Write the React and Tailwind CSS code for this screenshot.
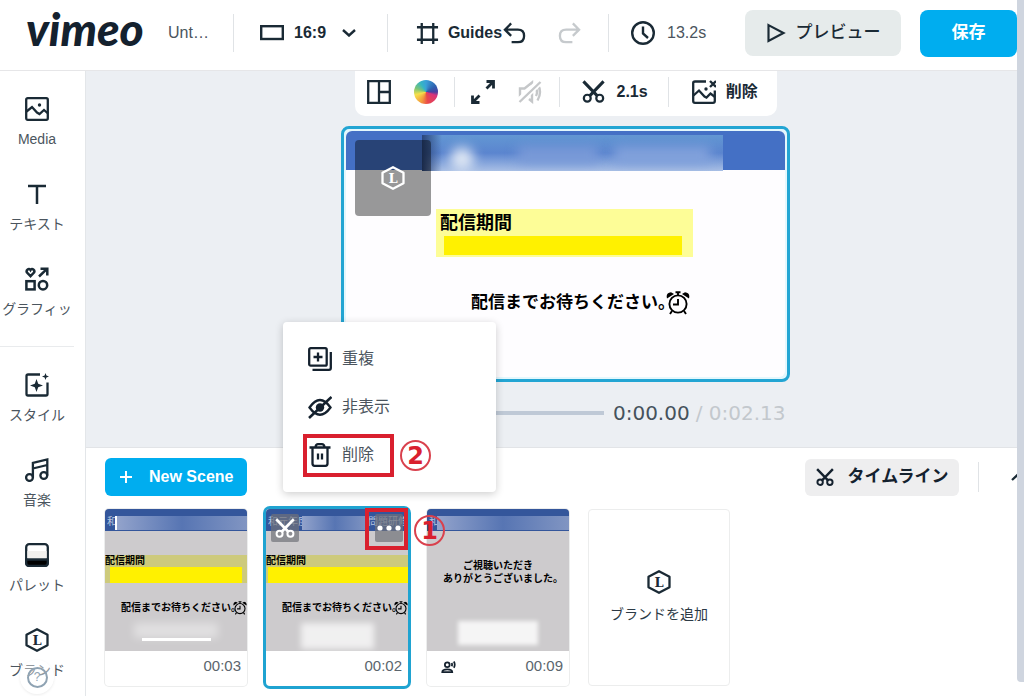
import { useState } from "react";
import clsx from "clsx";

/* icons, all drawn on a 24 x 24 grid */
const Icon = ({ children, className = "size-6", ...props }) => (
  <svg
    viewBox="0 0 24 24"
    fill="none"
    stroke="currentColor"
    strokeWidth="2.300"
    aria-hidden="true"
    className={clsx("shrink-0", className)}
    {...props}
  >
    {children}
  </svg>
);

const MediaIcon = () => (
  <Icon>
    <rect x="1.2" y="1.2" width="21.6" height="21.6" rx="1.5" />
    <path d="M1.500 14.500 7 10l5 5.500 2.500 1.500 4.500-4 4 3.500" />
    <circle cx="14.500" cy="8" r="1.700" fill="currentColor" stroke="none" />
  </Icon>
);

const TextIcon = () => (
  <Icon>
    <path d="M3 4h18M12 4v18" strokeWidth="2.500" />
  </Icon>
);

const GraphicsIcon = () => (
  <Icon strokeWidth="2.500">
    <path d="M5.500 9.200 2 5.600C.6 3.200 4 .4 5.500 3 7 .4 10.400 3.200 9 5.600Z" />
    <path d="M14 9.500 22 1.800M15.500 1.800H22.300V8.500" />
    <rect x="1.400" y="14.200" width="8.200" height="8.200" />
    <circle cx="18" cy="18.200" r="4.200" />
  </Icon>
);

const StyleIcon = () => (
  <Icon>
    <path d="M15 1.500H3Q1.500 1.500 1.500 3V21Q1.500 22.500 3 22.500H21Q22.500 22.500 22.500 21V9.500" />
    <path
      d="M11.500 6 13.200 10.800l4.800 1.700-4.800 1.700L11.500 19l-1.700-4.800L5 12.500l4.800-1.700ZM20.500 0l.9 2.600L24 3.500l-2.600.9-.9 2.600-.9-2.600L17 3.500l2.600-.9Z"
      fill="currentColor"
      stroke="none"
    />
  </Icon>
);

const MusicIcon = () => (
  <Icon>
    <circle cx="4.500" cy="19.500" r="3.400" />
    <circle cx="18.800" cy="17.500" r="3.400" />
    <path d="M7.900 19.500V5L22.300 1.500V17.500M7.900 10.500 22.300 7" />
  </Icon>
);

const PaletteIcon = () => (
  <Icon>
    <rect x="1.200" y="1.200" width="21.600" height="21.600" rx="3" fill="#fff" />
    <path d="M2.400 8h19.200v7H2.400z" fill="#f1f0ee" stroke="none" />
    <path d="M1.200 16.500h21.600V20q0 2.800-2.800 2.800H4q-2.800 0-2.800-2.800z" fill="#000" />
  </Icon>
);

const BrandIcon = (props) => (
  <Icon {...props}>
    <path d="M12 1.200 22.500 6.800V17.200L12 22.800 1.500 17.200V6.800Z" strokeLinejoin="round" />
    <text
      x="12"
      y="16.500"
      textAnchor="middle"
      fontSize="13"
      fontWeight="700"
      fill="currentColor"
      stroke="none"
      className="font-['DejaVu_Serif',serif]"
    >
      L
    </text>
  </Icon>
);

const ScissorsIcon = (props) => (
  <Icon {...props}>
    <circle cx="5.500" cy="19" r="3.600" />
    <circle cx="18.500" cy="19" r="3.600" />
    <path d="M1.500 1.500 16 16.500M22.500 1.500 8 16.500" strokeWidth="3.200" />
  </Icon>
);

const LayoutIcon = () => (
  <Icon>
    <path d="M1.200 1.200H22.800V22.800H1.200ZM12 1V23M12 12H23" />
  </Icon>
);

const ExpandIcon = () => (
  <Icon strokeWidth="2.800">
    <path d="M15.500 8.500 22 2M15.500 1.500h7V8.500M8.500 15.500 2 22M1.500 15.500v7H8.500" />
  </Icon>
);

const MuteIcon = () => (
  <Icon strokeWidth="2.400">
    <path d="M8 17H2V8.500H6.500L14 2.500V21.500L11 19" />
    <path d="M18 8.500q2 3.500 0 7.500M19.500 4q5 8 0 16.500" />
    <path d="M1 21.500 22 1.500" stroke="#fff" strokeWidth="7" />
    <path d="M1.500 22 22.500 2" />
  </Icon>
);

const ImageOffIcon = () => (
  <Icon>
    <path d="M14 1.500H3Q1.200 1.500 1.200 3V21Q1.200 22.800 3 22.800H21Q22.800 22.800 22.800 21V10.500" />
    <path d="M1.500 15.500 7 10.500l5.500 6 2 1 4-4 4.500 3.500M18 1l6 6M24 1 18 7" />
    <circle cx="14" cy="9" r="1.700" fill="currentColor" stroke="none" />
  </Icon>
);

const DuplicateIcon = () => (
  <Icon>
    <rect x="1.200" y="1.200" width="17.500" height="17.500" rx="1.500" />
    <path d="M5.500 10h9M10 5.500v9M22.800 5V21q0 1.800-1.800 1.800H4.500" />
  </Icon>
);

const HideIcon = () => (
  <Icon>
    <path d="M1.500 12.500Q12-2.500 22.500 12.500 12 27 1.500 12.500Z" />
    <circle cx="12" cy="12.500" r="4.200" fill="currentColor" stroke="none" />
    <path d="M1 23 23.500 2" strokeWidth="2.600" />
  </Icon>
);

const TrashIcon = () => (
  <Icon>
    <path d="M4.500 5V20.500Q4.500 22.800 6.500 22.800H17.500Q19.500 22.800 19.500 20.500V5M1.500 4.500H22.500M7.500 4Q8 1.200 10 1.200H14Q16 1.200 16.500 4" />
    <path d="M10 10.500v6M14 10.500v6" />
  </Icon>
);

const AlarmIcon = ({ className }) => (
  <Icon strokeWidth="1.900" className={className}>
    <circle cx="12" cy="13" r="8.600" />
    <path d="M12 8v5.500H7M12 4V1M9.500 1.200h5M6 20l-2 3M18 20l2 3" />
    <path
      d="M1 7.500Q-.5 2 5 1.200L8 3ZM23 7.500Q24.500 2 19 1.200L16 3Z"
      fill="currentColor"
      stroke="none"
    />
  </Icon>
);

const PresenterIcon = () => (
  <Icon className="size-[15px]" strokeWidth="2.800">
    <circle cx="10" cy="9" r="3.800" />
    <path d="M2 21q0-4.500 8-4.500t8 4.500z" />
    <path d="M17 6.500q1.500 2.500 0 5M20.500 4q3 5 0 10" />
  </Icon>
);

const mainTools = [
  { label: "Media", icon: MediaIcon },
  { label: "テキスト", icon: TextIcon },
  { label: "グラフィッ", icon: GraphicsIcon },
];

const styleTools = [
  { label: "スタイル", icon: StyleIcon },
  { label: "音楽", icon: MusicIcon },
  { label: "パレット", icon: PaletteIcon },
  { label: "ブランド", icon: BrandIcon },
];

const menuItems = [
  { label: "重複", icon: DuplicateIcon },
  { label: "非表示", icon: HideIcon },
  { label: "削除", icon: TrashIcon },
];

const App = () => {
  const [selected, setSelected] = useState(1);

  return (
    <div className="flex min-h-screen bg-white font-['Liberation_Sans','Noto_Sans_CJK_JP',sans-serif] text-[#1a2a35]">
      <div className="flex min-w-0 flex-1 flex-col overflow-hidden">
        <Header />
        <div className="flex flex-1">
          <Sidebar />
          <main className="flex min-w-0 flex-1 flex-col border-l border-[#e3e6e9]">
            <Stage />
            <Timeline selected={selected} setSelected={setSelected} />
          </main>
        </div>
      </div>
      {/* scroll bar */}
      <div className="w-[7px] shrink-0 pb-3.5">
        <div className="h-full rounded-bl bg-[#cfd5df]" />
      </div>
    </div>
  );
};

const Divider = ({ className }) => (
  <div className={clsx("w-px shrink-0 bg-[#e0e3e6]", className)} />
);

const Header = () => (
  <header className="flex h-[71px] items-center border-b border-[#e6e6e8] pb-1 pl-[26px]">
    <a
      href="#home"
      className="w-[118px] shrink-0 pb-2 font-['Lato',sans-serif] text-[46px] leading-none font-black text-[#14212e] italic"
    >
      vimeo
    </a>
    <span className="ml-6 w-[43px] shrink-0 text-base text-[#4b555e]">Unt…</span>
    <Divider className="ml-[22px] h-[38px]" />
    <button className="ml-[26px] flex shrink-0 items-center text-base font-bold">
      <Icon className="h-4 w-6" viewBox="0 0 24 16" strokeWidth="2.400">
        <rect x="1.200" y="1.200" width="21.600" height="12.800" />
      </Icon>
      <span className="ml-2.5 w-[48px] text-left">16:9</span>
      <Icon className="h-2 w-3.5" viewBox="0 0 14 8" strokeWidth="2.400">
        <path d="M1 1 7 6.500 13 1" />
      </Icon>
    </button>
    <Divider className="ml-[31px] h-[38px]" />
    <button className="ml-7 flex shrink-0 items-center gap-2 text-base font-bold">
      <Icon className="size-[23px]" strokeWidth="2.400">
        <path d="M1 5.500h22M1 18.500h22M6 1v22M18 1v22" />
      </Icon>
      <span className="w-14">Guides</span>
    </button>
    <button aria-label="Undo" className="shrink-0">
      <Icon className="size-[23px]" strokeWidth="2.400">
        <path d="M8.500 1.500 2 8l6.500 6.500M2 8h13.500q6.500 0 6.500 6.500T15.500 21H9" />
      </Icon>
    </button>
    <button aria-label="Redo" className="ml-8 shrink-0 text-[#c6cacd]">
      <Icon className="size-[23px]" strokeWidth="2.400">
        <path d="M15.500 1.500 22 8l-6.500 6.500M22 8H8.500Q2 8 2 14.500T8.500 21H15" />
      </Icon>
    </button>
    <Divider className="ml-[27px] h-[38px]" />
    <div className="ml-[22px] flex shrink-0 items-center gap-3 text-base text-[#4b555e]">
      <Icon className="size-6 text-[#1a2a35]" strokeWidth="2.400">
        <circle cx="12" cy="12" r="10.800" />
        <path d="M12 5.500V12.500L17 17" />
      </Icon>
      13.2s
    </div>
    <button className="ml-auto flex h-[46px] w-[156px] shrink-0 items-center justify-center gap-2.5 rounded-lg bg-[#e6ebeb] text-[17px] font-medium">
      <Icon className="size-5">
        <path d="M3 2.500 21 12 3 21.500Z" strokeWidth="2.600" />
      </Icon>
      プレビュー
    </button>
    <button className="ml-[19px] h-[47px] w-[97px] shrink-0 rounded-lg bg-[#00adef] text-[17px] font-bold text-white">
      保存
    </button>
  </header>
);

const SideTool = ({ label, icon: ToolIcon }) => (
  <button className="flex h-[85px] w-full flex-col items-center gap-1.5 pt-6">
    <ToolIcon />
    <span className="text-sm leading-6 whitespace-nowrap text-[#4b555e]">
      {label}
    </span>
  </button>
);

const Sidebar = () => (
  <nav className="relative w-[85px] shrink-0 pt-0.5 pr-[11px]">
    {mainTools.map((tool) => (
      <SideTool key={tool.label} {...tool} />
    ))}
    <div className="mt-[18px] h-px bg-[#e9ebed]" />
    <div className="pt-0.5">
      {styleTools.map((tool) => (
        <SideTool key={tool.label} {...tool} />
      ))}
    </div>
    {/* help bubble floats over the last tool */}
    <button
      aria-label="Help"
      className="absolute bottom-0.5 left-5 flex size-[34px] items-center justify-center rounded-full bg-white/40 shadow-[0_1px_3px_rgba(0,0,0,0.08)]"
    >
      <span className="flex size-[21px] items-center justify-center rounded-full border-2 border-[#8fa3b3] text-xs text-[#8fa3b3]">
        ?
      </span>
    </button>
  </nav>
);

const Stage = () => (
  <section className="flex flex-col items-center border-b border-[#e2e4e7] bg-[#eceff3] pb-[22px] pl-7">
    <div className="flex h-[45px] w-[422px] items-center rounded-b-[10px] bg-white px-3 pb-1">
      <button aria-label="Layout">
        <LayoutIcon />
      </button>
      {/* colour wheel */}
      <button
        aria-label="Color"
        className="ml-[23px] size-6 rounded-full bg-[conic-gradient(#3aa0d8,#2f5fae_60deg,#4a3fa0_90deg,#d8337c_110deg,#e9484a_170deg,#f39a3c_205deg,#f6e04b_255deg,#7cc576_290deg,#35b5c4_330deg,#3aa0d8)]"
      />
      <Divider className="ml-4 h-[30px]" />
      <button aria-label="Expand" className="ml-4">
        <ExpandIcon />
      </button>
      <button aria-label="Mute" className="ml-[23px] text-[#c5c7c9]">
        <MuteIcon />
      </button>
      <Divider className="ml-[17px] h-[30px]" />
      <button className="ml-[22px] flex items-center gap-3 text-base font-bold">
        <ScissorsIcon className="size-[23px]" />
        2.1s
      </button>
      <Divider className="ml-5 h-[30px]" />
      <button className="ml-[23px] flex items-center gap-2.5 text-base font-bold whitespace-nowrap">
        <ImageOffIcon />
        削除
      </button>
    </div>

    {/* slide preview */}
    <div className="mt-2.5 w-[449px] rounded-lg border-3 border-[#23a5d3] bg-[#e3f7fd] p-0.5">
      <div className="h-[246px] overflow-hidden rounded-md bg-[#fefdff]">
        <div className="relative h-[39px] bg-[#4470c5]">
          <div className="absolute top-1 right-[62px] left-[76px] h-9 overflow-hidden bg-linear-to-b from-[#6297d3] via-[#5b85cf] to-[#a9bfe5]">
            <div className="absolute top-3 left-7 size-6 rounded-full bg-[#dce5f3] blur-[6px]" />
            <div className="absolute top-3 left-24 h-4 w-20 bg-[#7b9bd8] blur-[6px]" />
            <div className="absolute top-3 left-48 h-4 w-24 bg-[#84a3dc] blur-[6px]" />
            <div className="absolute inset-y-0 left-0 w-5 bg-linear-to-r from-[#2a457a] to-transparent" />
          </div>
          <div className="absolute top-[9px] left-[9px] flex size-[76px] items-center justify-center rounded bg-black/40 text-white">
            <BrandIcon className="size-6" />
          </div>
        </div>
        <div className="mt-[39px] ml-[90px] h-12 w-[257px] bg-[#fdfd97] pt-1 pl-1">
          <p className="text-lg leading-5 font-bold text-black">配信期間</p>
          <div className="mt-[3px] ml-1 h-[19px] w-[238px] bg-[#fff100]" />
        </div>
        <p className="mt-[34px] ml-[125px] flex items-center text-[17px] leading-6 font-bold whitespace-nowrap text-black">
          <span className="w-[195px]">配信までお待ちください。</span>
          <AlarmIcon className="size-6" />
        </p>
      </div>
    </div>

    <div className="mt-[19px] flex w-[440px] items-center font-['DejaVu_Sans',sans-serif] text-[20px] leading-6">
      <div className="mr-[9px] h-1 flex-1 bg-[#bfc9d6]" />
      <span className="text-[#45525c]">0:00.00</span>
      <span className="ml-1.5 text-[#c3c8cd]">/ 0:02.13</span>
    </div>
  </section>
);

const Timeline = ({ selected, setSelected }) => (
  <section className="flex flex-1 flex-col pt-2.5 pb-2.5 pl-[19px]">
    <div className="flex items-center">
      <button className="flex h-[38px] w-[142px] items-center gap-4 rounded-md bg-[#00adef] pl-3.5 text-base font-bold whitespace-nowrap text-white">
        <Icon className="size-3.5" viewBox="0 0 14 14" strokeWidth="2">
          <path d="M7 1v12M1 7h12" />
        </Icon>
        New Scene
      </button>
      <button className="ml-auto flex h-[37px] w-[154px] items-center justify-center gap-3.5 rounded-md bg-[#eeeeef] text-[17px] font-bold whitespace-nowrap text-[#14212e]">
        <ScissorsIcon className="size-[18px]" strokeWidth="2.600" />
        タイムライン
      </button>
      <Divider className="ml-[19px] h-[30px]" />
      <button aria-label="Collapse" className="ml-8 w-1.5 overflow-hidden">
        <Icon className="h-2 w-3.5" viewBox="0 0 14 8">
          <path d="M1 7 7 1.500 13 7" />
        </Icon>
      </button>
    </div>

    <div className="mt-[13px] flex gap-[19px]">
      <SceneCard time="00:03" active={selected === 0} onSelect={() => setSelected(0)}>
        <WaitingSlide title="和" bar="mx-[5px]">
          <div className="mx-auto mt-2 h-[15px] w-[84px] bg-white/40 blur-[4px]" />
          <div className="mx-auto h-[3px] w-[69px] bg-white" />
        </WaitingSlide>
      </SceneCard>
      <SceneCard
        time="00:02"
        active={selected === 1}
        onSelect={() => setSelected(1)}
        overlay={<SceneOverlay />}
      >
        <WaitingSlide title="和元年度" rest="問題研修" bar="ml-0.5">
          <div className="mx-auto mt-2 h-[26px] w-[73px] bg-white/70 blur-[3px]" />
        </WaitingSlide>
      </SceneCard>
      <SceneCard
        time="00:09"
        badge={<PresenterIcon />}
        active={selected === 2}
        onSelect={() => setSelected(2)}
      >
        <SlideHeader title="和" cover="left-2.5 right-0" />
        <p className="mt-7 pl-4 text-[10px] leading-[13px] font-bold whitespace-nowrap text-black">
          <span className="block pl-5">ご視聴いただき</span>
          <span className="block">ありがとうございました。</span>
        </p>
        <div className="mx-auto mt-9 h-6 w-20 bg-white/80 blur-[2px]" />
      </SceneCard>
      <button className="flex h-[177px] w-[142px] shrink-0 flex-col items-center justify-center gap-2 rounded border border-[#eceded] text-sm whitespace-nowrap text-[#2c3a45]">
        <BrandIcon className="size-6 text-[#1a2a35]" />
        <span className="leading-6">ブランドを追加</span>
      </button>
    </div>
  </section>
);

const SceneCard = ({ time, badge, active, onSelect, overlay, children }) => (
  <article
    className={clsx(
      "relative w-[142px] shrink-0 rounded",
      active ? "ring-3 ring-[#1fa3d1]" : "ring-1 ring-[#eceded]",
    )}
  >
    <div onClick={onSelect} className="h-[142px] overflow-hidden rounded-t bg-[#cdcbcd]">
      {children}
    </div>
    <div className="flex h-[35px] items-center justify-between pr-1.5 pb-1 pl-3.5 text-[15px] text-[#5b656d]">
      <span className="text-[#14212e]">{badge}</span>
      {time}
    </div>
    {overlay}
  </article>
);

const SlideHeader = ({ title, rest, cover }) => (
  <div className="relative flex h-[22px] items-center justify-between bg-[#34569b] pt-1 pl-0.5 text-[10px] leading-none text-[#b9c6df]">
    <span>{title}</span>
    <span>{rest}</span>
    <div
      className={clsx(
        "absolute top-[7px] bottom-px bg-linear-to-r from-[#93a3cb] via-[#5775b3] to-[#8195c2]",
        cover,
      )}
    />
  </div>
);

const WaitingSlide = ({ title, rest, bar, children }) => (
  <>
    <SlideHeader
      title={title}
      rest={rest}
      cover={rest ? "left-9 right-10" : "left-2.5 right-0 border-l-2 border-white"}
    />
    <div className="mt-6 h-7 bg-[#cdca7c]">
      <p className="text-[10px] leading-3 font-bold text-black">配信期間</p>
      <div className={clsx("h-4 bg-[#fff100]", bar)} />
    </div>
    <p className="mt-[18px] ml-4 flex items-center text-[10px] leading-[14px] font-bold whitespace-nowrap text-black">
      <span className="w-28">配信までお待ちください。</span>
      <AlarmIcon className="size-3.5" />
    </p>
    {children}
  </>
);

/* numbered step circle */
const Step = ({ number, className }) => (
  <span
    className={clsx(
      "absolute flex size-[31px] items-center justify-center rounded-full border-2 border-[#d9414d] font-['DejaVu_Sans',sans-serif] text-2xl leading-none font-bold text-[#d9202e]",
      className,
    )}
  >
    {number}
  </span>
);

const SceneOverlay = () => (
  <>
    <button
      aria-label="Trim"
      className="absolute top-[5px] left-[5px] flex size-7 items-center justify-center rounded-xs bg-[#707279]/70 text-white"
    >
      <ScissorsIcon className="size-5" strokeWidth="2.400" />
    </button>
    <button
      aria-label="More"
      className="absolute top-[5px] right-[5px] flex size-7 items-center justify-center rounded-xs bg-[#707279]/70 text-white"
    >
      <Icon className="h-1.5 w-6" viewBox="0 0 24 6" fill="currentColor" stroke="none">
        <circle cx="3" cy="3" r="2.600" />
        <circle cx="12" cy="3" r="2.600" />
        <circle cx="21" cy="3" r="2.600" />
      </Icon>
    </button>
    <div className="pointer-events-none absolute -top-px right-0 h-[42px] w-[43px] border-4 border-[#d9202e]" />
    <Step number={1} className="top-[6px] left-[148px] z-10" />

    <div className="absolute bottom-full left-[17px] z-20 mb-[17px] w-[213px] rounded bg-white py-[13px] shadow-[0_2px_8px_rgba(0,0,0,0.2)]">
      {menuItems.map(({ label, icon: ItemIcon }) => (
        <button
          key={label}
          className="flex h-12 w-full items-center gap-2.5 pl-[25px] text-base text-[#4b555e]"
        >
          <span className="text-[#14212e]">
            <ItemIcon />
          </span>
          {label}
        </button>
      ))}
      <div className="pointer-events-none absolute bottom-[15px] left-5 h-[43px] w-[91px] border-4 border-[#d9202e]" />
      <Step number={2} className="bottom-[21px] left-[117px]" />
    </div>
  </>
);

export default App;
